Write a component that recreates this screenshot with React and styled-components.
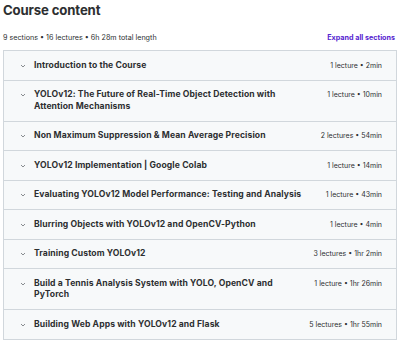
import styled, { createGlobalStyle } from 'styled-components';

const GlobalStyle = createGlobalStyle`
  body {
    margin: 0;
    background: #ffffff;
    font-family: Inter, "Liberation Sans", sans-serif;
    color: #2d2f31;
  }
`;

const sections = [
  { title: 'Introduction to the Course', meta: '1 lecture • 2min' },
  { title: 'YOLOv12: The Future of Real-Time Object Detection with Attention Mechanisms', meta: '1 lecture • 10min' },
  { title: 'Non Maximum Suppression & Mean Average Precision', meta: '2 lectures • 54min' },
  { title: 'YOLOv12 Implementation | Google Colab', meta: '1 lecture • 14min' },
  { title: 'Evaluating YOLOv12 Model Performance: Testing and Analysis', meta: '1 lecture • 43min' },
  { title: 'Blurring Objects with YOLOv12 and OpenCV-Python', meta: '1 lecture • 4min' },
  { title: 'Training Custom YOLOv12', meta: '3 lectures • 1hr 2min' },
  { title: 'Build a Tennis Analysis System with YOLO, OpenCV and PyTorch', meta: '1 lecture • 1hr 26min' },
  { title: 'Building Web Apps with YOLOv12 and Flask', meta: '5 lectures • 1hr 55min' },
];

const Wrapper = styled.section`
  padding: 0 3px 0 3px;
`;

const Title = styled.h2`
  margin: 0;
  padding-top: 1px;
  font-size: 13.2px;
  line-height: 18px;
  font-weight: 700;
  letter-spacing: -0.15px;
  color: #2d2f31;
`;

const Summary = styled.div`
  display: flex;
  justify-content: space-between;
  align-items: center;
  margin-top: 12px;
  height: 12px;
  font-size: 7.2px;
  color: #2d2f31;
  .expand {
    font-weight: 700;
    color: #5624d0;
    padding-right: 2px;
  }
`;

const Table = styled.div`
  margin-top: 7px;
  border: 1px solid #d1d7dc;
  border-bottom: none;
`;

const Row = styled.div`
  display: grid;
  grid-template-columns: 6px 1fr auto;
  column-gap: 8px;
  align-items: start;
  padding: 8.5px 14px 8.5px 16px;
  background: #f7f9fa;
  border-bottom: 1px solid #d1d7dc;
  line-height: 11.5px;
`;

const Chevron = styled.svg`
  width: 6px;
  height: 11.5px;
`;

const SectionTitle = styled.div`
  max-width: 272px;
  font-size: 8.6px;
  font-weight: 700;
  letter-spacing: 0.1px;
  color: #2d2f31;
`;

const Meta = styled.div`
  font-size: 7px;
  color: #2d2f31;
  white-space: nowrap;
`;

export default function App() {
  return (
    <>
      <GlobalStyle />
      <Wrapper>
        <Title>Course content</Title>
        <Summary>
          <span>9 sections • 16 lectures • 6h 28m total length</span>
          <span className='expand'>Expand all sections</span>
        </Summary>
        <Table>
          {sections.map(({ title, meta }) => (
            <Row key={title}>
              <Chevron viewBox='0 0 6 11.5'>
                <path d='M1 5 L3 7 L5 5' fill='none' stroke='#6a6f73' strokeWidth='0.8' />
              </Chevron>
              <SectionTitle>{title}</SectionTitle>
              <Meta>{meta}</Meta>
            </Row>
          ))}
        </Table>
      </Wrapper>
    </>
  );
}
